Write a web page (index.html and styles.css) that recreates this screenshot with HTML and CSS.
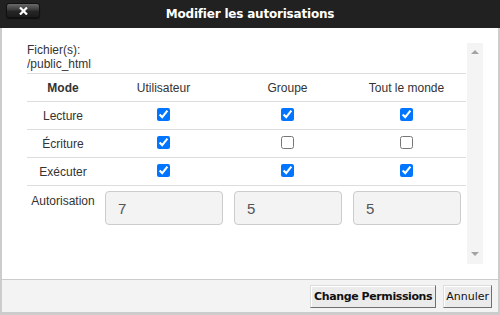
FILE: index.html
```html
<!DOCTYPE html>
<html lang="fr">

<head>
  <meta charset="UTF-8" />
  <meta name="viewport" content="width=device-width, initial-scale=1.0" />
  <title>Modifier les autorisations</title>
  <link rel="stylesheet" href="styles.css">
</head>

<body>
  <div class="dialog">
    <div class="titlebar">
      <button class="close">
        <svg width="9" height="8" viewBox="0 0 9 8">
          <path d="M1 0.5 L8 7.5 M8 0.5 L1 7.5" stroke="#fff" stroke-width="2.2" />
        </svg>
      </button>
      <span class="title">Modifier les autorisations</span>
    </div>
    <div class="main">
      <div class="content">
        <div class="scroll">
          <div class="scroll-body">
            <div class="files">
              <div>Fichier(s):</div>
              <div>/public_html</div>
            </div>
            <table class="perms">
              <colgroup>
                <col class="c-mode">
                <col class="c-user">
                <col class="c-group">
                <col class="c-world">
              </colgroup>
              <tr>
                <th>Mode</th>
                <td>Utilisateur</td>
                <td>Groupe</td>
                <td>Tout le monde</td>
              </tr>
              <tr>
                <td>Lecture</td>
                <td><input type="checkbox" checked></td>
                <td><input type="checkbox" checked></td>
                <td><input type="checkbox" checked></td>
              </tr>
              <tr>
                <td>Écriture</td>
                <td><input type="checkbox" checked></td>
                <td><input type="checkbox"></td>
                <td><input type="checkbox"></td>
              </tr>
              <tr>
                <td>Exécuter</td>
                <td><input type="checkbox" checked></td>
                <td><input type="checkbox" checked></td>
                <td><input type="checkbox" checked></td>
              </tr>
              <tr class="octal">
                <td>Autorisation</td>
                <td><input type="text" value="7"></td>
                <td><input type="text" value="5"></td>
                <td><input type="text" value="5"></td>
              </tr>
            </table>
          </div>
          <div class="scrollbar">
            <span class="arrow up"></span>
            <span class="arrow down"></span>
          </div>
        </div>
      </div>
      <div class="footer">
        <button class="btn btn-primary">Change Permissions</button>
        <button class="btn">Annuler</button>
      </div>
    </div>
  </div>
</body>

</html>
```

FILE: styles.css
```css
* {
  box-sizing: border-box;
}

body {
  margin: 0;
  font-family: "Liberation Sans", Arial, sans-serif;
  font-size: 12px;
  color: #333;
}

.dialog {
  width: 500px;
  height: 315px;
  overflow: hidden;
}

.titlebar {
  height: 28px;
  background: #212121;
  display: flex;
  align-items: center;
  justify-content: center;
  position: relative;
}

.titlebar .title {
  color: #fff;
  font-family: "DejaVu Sans", Verdana, sans-serif;
  font-weight: bold;
  font-size: 12px;
  letter-spacing: -0.2px;
}

.titlebar .close {
  position: absolute;
  left: 6px;
  top: 3px;
  width: 34px;
  height: 15px;
  padding: 0;
  border: 1px solid #111;
  border-radius: 3px;
  background: linear-gradient(#6a6a6a, #3a3a3a 45%, #262626 55%, #1c1c1c);
  box-shadow: 0 1px 1px rgba(0, 0, 0, 0.6);
  display: flex;
  align-items: center;
  justify-content: center;
}

.titlebar .close svg {
  display: block;
}

.main {
  height: 287px;
  border-left: 2px solid #ccc;
  border-right: 2px solid #ccc;
  border-bottom: 3px solid #ccc;
}

.content {
  height: 251px;
  padding: 15px 15px 15px 25px;
  background: #fff;
}

.scroll {
  height: 221px;
  display: flex;
  overflow: hidden;
}

.scroll-body {
  flex: 1;
}

.scrollbar {
  width: 16px;
  background: #f4f4f4;
  display: flex;
  flex-direction: column;
  justify-content: space-between;
  align-items: center;
  padding: 7px 0 8px;
}

.arrow {
  width: 0;
  height: 0;
  border-left: 4px solid transparent;
  border-right: 4px solid transparent;
}

.arrow.up {
  border-bottom: 4px solid #a3a3a3;
}

.arrow.down {
  border-top: 4px solid #a3a3a3;
}

.files {
  line-height: 14px;
  margin-bottom: 2px;
}

.perms {
  width: 439px;
  border-collapse: collapse;
  table-layout: fixed;
}

.perms .c-mode {
  width: 72px;
}

.perms .c-user {
  width: 129px;
}

.perms .c-group,
.perms .c-world {
  width: 119px;
}

.perms th,
.perms td {
  height: 28px;
  padding: 0;
  text-align: center;
  vertical-align: middle;
  font-weight: normal;
}

.perms th {
  font-weight: bold;
}

.perms tr {
  border-top: 1px solid #ddd;
}

.perms tr:first-child {
  height: 27px;
}

.perms input[type="checkbox"] {
  margin: 0;
  width: 13px;
  height: 13px;
  vertical-align: middle;
  position: relative;
  top: -2px;
}

.perms .octal td {
  vertical-align: top;
  padding: 5px 5px 0 6px;
}

.perms .octal td:first-child {
  padding: 8px 0 0;
}

.perms .octal input {
  width: 100%;
  height: 34px;
  border: 1px solid #ccc;
  border-radius: 4px;
  background: #f3f3f3;
  padding: 0 12px;
  font-family: "Liberation Sans", Arial, sans-serif;
  font-size: 15px;
  color: #555;
}

.footer {
  height: 33px;
  border-top: 1px solid #ccc;
  background: #f3f3f3;
  display: flex;
  justify-content: flex-end;
  align-items: center;
  gap: 7px;
  padding: 0 6px 0 0;
}

.btn {
  height: 23px;
  padding: 0 2px;
  border: 1px solid;
  border-color: #ddd #707070 #707070 #ddd;
  background: #ebebeb;
  box-shadow: inset 1px 1px 0 #fff;
  font-family: "DejaVu Sans", Tahoma, sans-serif;
  font-size: 11px;
  color: #111;
  cursor: pointer;
}

.btn-primary {
  padding: 0 3px;
  font-weight: bold;
  letter-spacing: -0.4px;
}
```
